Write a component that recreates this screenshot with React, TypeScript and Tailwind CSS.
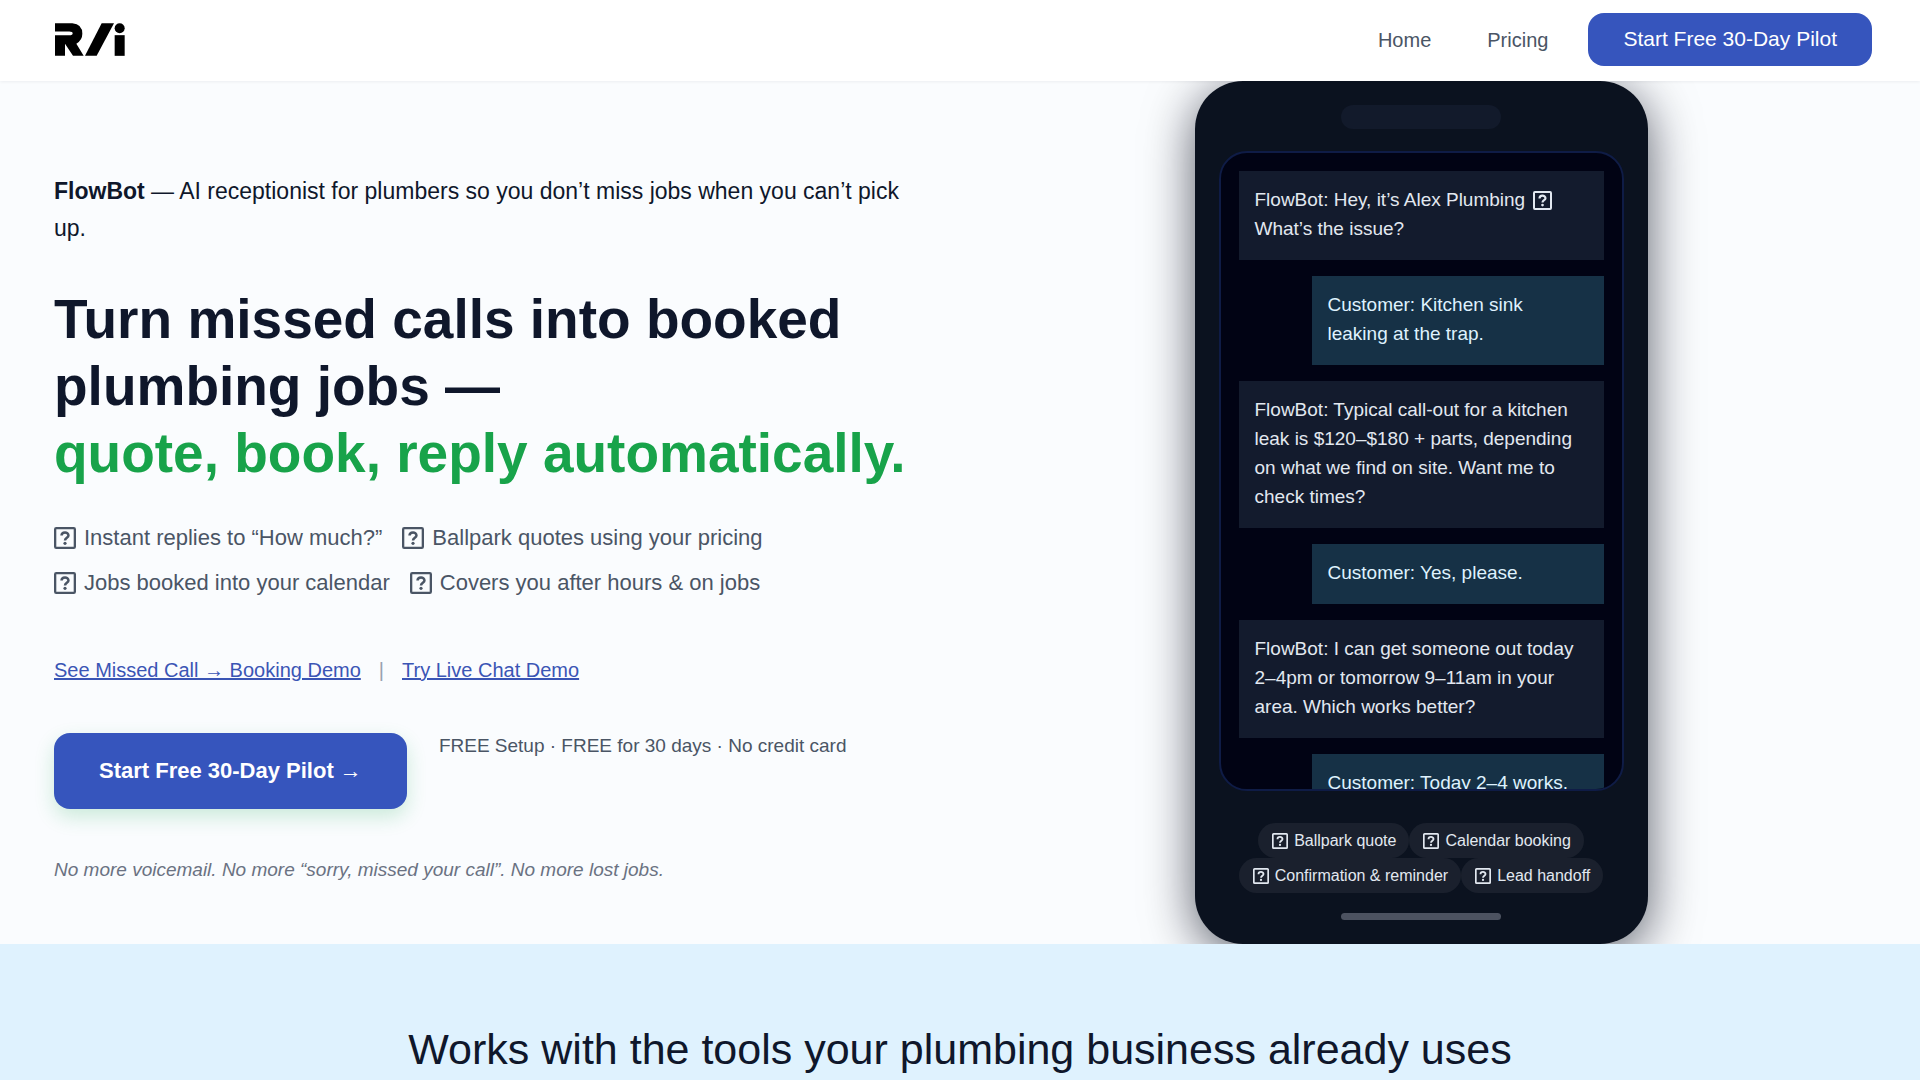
import clsx from 'clsx';

const messages = [
  { from: 'bot', text: 'FlowBot: Hey, it’s Alex Plumbing', icon: true, rest: 'What’s the issue?' },
  { from: 'customer', text: 'Customer: Kitchen sink leaking at the trap.' },
  {
    from: 'bot',
    text: 'FlowBot: Typical call-out for a kitchen leak is $120–$180 + parts, depending on what we find on site. Want me to check times?',
  },
  { from: 'customer', text: 'Customer: Yes, please.' },
  {
    from: 'bot',
    text: 'FlowBot: I can get someone out today 2–4pm or tomorrow 9–11am in your area. Which works better?',
  },
  { from: 'customer', text: 'Customer: Today 2–4 works.' },
];

const features = [
  ['Instant replies to “How much?”', 'Ballpark quotes using your pricing'],
  ['Jobs booked into your calendar', 'Covers you after hours & on jobs'],
];

const chips = ['Ballpark quote', 'Calendar booking', 'Confirmation & reminder', 'Lead handoff'];

function Logo() {
  return (
    <svg viewBox="0 0 210 98" className="h-[33px] w-[70px]" fill="#000" aria-hidden="true">
      <path d="M0 0H52Q82 2 82 32Q82 51 64 62L86 98H54L30 62V98H0V36H43Q53 36 53 30Q53 25 43 25H0Z" />
      <path d="M140 0H177L125 98H90Z" />
      <circle cx="194" cy="15" r="15" />
      <rect x="179" y="36" width="30" height="62" />
    </svg>
  );
}

function BoxIcon({ className }: { className?: string }) {
  return (
    <svg viewBox="0 0 21 21" className={clsx('inline-block shrink-0', className)} fill="none" stroke="currentColor" aria-hidden="true">
      <rect x="1.1" y="1.1" width="18.8" height="18.8" rx="1" strokeWidth="2.2" />
      <path d="M7.2 8.2C7.2 4.2 13.8 4.2 13.8 8C13.8 10.2 10.5 10.2 10.5 12.8" strokeWidth="2.4" />
      <circle cx="10.5" cy="15.6" r="1.5" fill="currentColor" stroke="none" />
    </svg>
  );
}

function Header() {
  return (
    <header className="relative z-10 flex h-[81px] items-center justify-between bg-white pr-12 pb-0.5 pl-[55px] shadow-[0_1px_3px_rgba(15,23,42,0.06)]">
      <a href="#" aria-label="Home page">
        <Logo />
      </a>
      <nav className="flex items-center text-[20px] leading-[26px] text-gray-600">
        <a href="#home">Home</a>
        <a href="#pricing" className="ml-14">
          Pricing
        </a>
        <button className="ml-10 rounded-2xl bg-[#3655bd] px-[35px] pt-3 pb-3.5 text-[21px] leading-[27px] text-white">
          Start Free 30-Day Pilot
        </button>
      </nav>
    </header>
  );
}

function Phone() {
  return (
    <div className="flex w-[453px] flex-col items-center rounded-[48px] bg-[#0b121f] p-6 shadow-[0_10px_50px_rgba(2,6,23,0.65)]">
      <div className="h-6 w-40 rounded-full bg-[#121a2b]" />
      <div className="mt-[22px] flex h-[640px] w-full flex-col gap-4 overflow-hidden rounded-[28px] border-2 border-[#0f1c46] bg-[#010314] p-[18px]">
        {messages.map((m) => (
          <p
            key={m.text}
            className={clsx(
              'shrink-0 px-4 pt-3.5 pb-[17px] text-[19px] leading-[29px]',
              m.from === 'bot' ? 'bg-[#131b2d] text-slate-200' : 'w-4/5 self-end bg-[#163146] text-sky-100'
            )}
          >
            {m.text}
            {m.icon && <BoxIcon className="mx-2 size-[19px]" />}
            {m.rest}
          </p>
        ))}
      </div>
      <ul className="mt-8 flex flex-wrap justify-center text-[16px] leading-[19px] text-slate-200">
        {chips.map((chip) => (
          <li key={chip} className="flex items-center gap-1.5 rounded-full bg-[#1a202d] py-2 pr-[13px] pl-3.5">
            <BoxIcon className="size-4" />
            {chip}
          </li>
        ))}
      </ul>
      <div className="mt-5 h-[7px] w-40 rounded-full bg-[#4c5260]" />
    </div>
  );
}

function Hero() {
  return (
    <section className="grid grid-cols-2 gap-8 overflow-hidden bg-[#fafcfe] px-[54px]">
      <div className="pt-[92px]">
        <p className="max-w-[880px] text-[23px] leading-[37px] text-slate-900">
          <strong>FlowBot</strong> — AI receptionist for plumbers so you don’t miss jobs when you can’t pick up.
        </p>
        <h1 className="mt-[39px] text-[55px] leading-[67px] font-bold text-slate-900">
          Turn missed calls into booked
          <br />
          plumbing jobs —
          <br />
          <span className="text-[#18a34a]">quote, book, reply automatically.</span>
        </h1>
        <div className="mt-[35px] flex flex-col gap-[13px] text-[22px] leading-8 text-gray-600">
          {features.map((row) => (
            <ul key={row[0]} className="flex gap-5">
              {row.map((item) => (
                <li key={item} className="flex items-center gap-2">
                  <BoxIcon className="size-[22px]" />
                  {item}
                </li>
              ))}
            </ul>
          ))}
        </div>
        <div className="mt-14 flex gap-[18px] text-[20px] leading-[30px] text-[#3a55b5]">
          <a href="#demo" className="underline">
            See Missed Call → Booking Demo
          </a>
          <span className="text-gray-400">|</span>
          <a href="#chat" className="underline">
            Try Live Chat Demo
          </a>
        </div>
        <div className="mt-12 flex items-start gap-8">
          <button className="rounded-2xl bg-[#3655bd] px-[45px] py-[22px] text-[22px] leading-8 font-bold text-white shadow-[0_8px_20px_rgba(22,163,74,0.2)]">
            Start Free 30-Day Pilot →
          </button>
          <p className="text-[19px] leading-[26px] text-gray-600">FREE Setup · FREE for 30 days · No credit card</p>
        </div>
        <p className="mt-[46px] text-[19px] leading-[30px] text-gray-500 italic">
          No more voicemail. No more “sorry, missed your call”. No more lost jobs.
        </p>
      </div>
      <div className="flex justify-center">
        <Phone />
      </div>
    </section>
  );
}

export default function App() {
  return (
    <div className="h-screen overflow-hidden bg-sky-100 font-['Liberation_Sans',Arial,sans-serif]">
      <Header />
      <Hero />
      <section className="bg-sky-100 px-12 pt-20 pb-24 text-center">
        <h2 className="text-[43px] leading-[50px] text-slate-900">Works with the tools your plumbing business already uses</h2>
      </section>
    </div>
  );
}
